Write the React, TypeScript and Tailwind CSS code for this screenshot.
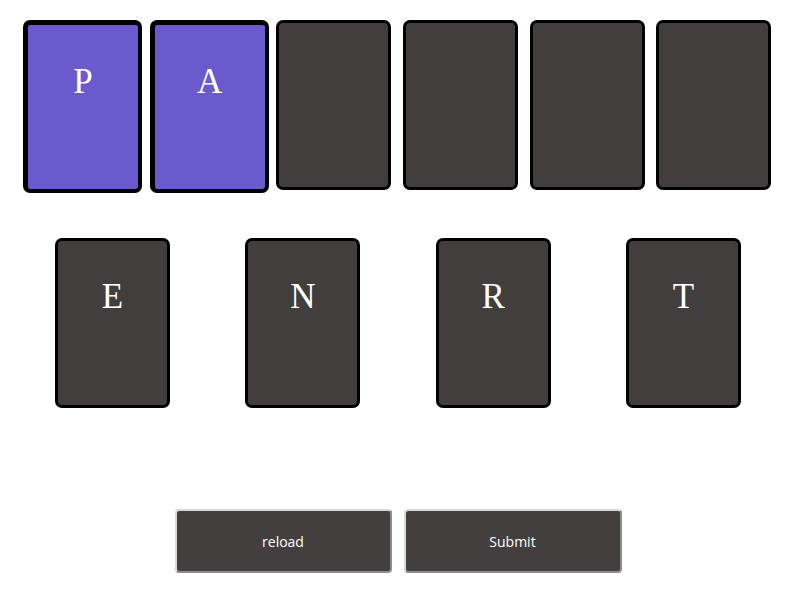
import React from "react";

const top = ["P", "A", "", "", "", ""];
const bottom = ["E", "N", "R", "T"];

function Card({ letter, active }: { letter: string; active?: boolean }) {
  if (active) {
    return (
      <div className="w-[119px] h-[173px] bg-[#6a5acd] border-black border-l-[5px] border-t-[5px] border-r-[4px] border-b-[4px] rounded-[7px] flex justify-center pt-[39px] text-white text-[35px] leading-none" style={{ fontFamily: '"Liberation Serif", serif' }}>
        {letter}
      </div>
    );
  }
  return (
    <div className="w-[115px] h-[170px] bg-[#423e3d] border-black border-[3px] rounded-[7px] flex justify-center pt-[38px] text-white text-[35px] leading-none" style={{ fontFamily: '"Liberation Serif", serif' }}>
      {letter}
    </div>
  );
}

export default function App() {
  return (
    <div className="w-[794px] h-[602px] bg-white relative" style={{ fontFamily: '"Open Sans", sans-serif' }}>
      <div className="pt-[20px] pl-[23px] grid grid-cols-[repeat(6,115px)] gap-x-[11.7px] items-start">
        {top.map((l, i) => (
          <Card key={i} letter={l} active={i < 2} />
        ))}
      </div>
      <div className="mt-[45px] pl-[55px] grid grid-cols-[repeat(4,115px)] gap-x-[75.3px]">
        {bottom.map((l, i) => (
          <Card key={i} letter={l} />
        ))}
      </div>
      <div className="mt-[101px] flex justify-center gap-[12px] pl-[2px]">
        <button className="w-[217px] h-[64px] bg-[#433f3e] text-white text-[14px] rounded-[4px] border-2 border-t-[#d8d8d8] border-l-[#d8d8d8] border-r-[#8c8c8c] border-b-[#8c8c8c]">
          reload
        </button>
        <button className="w-[218px] h-[64px] bg-[#433f3e] text-white text-[14px] rounded-[4px] border-2 border-t-[#d8d8d8] border-l-[#d8d8d8] border-r-[#8c8c8c] border-b-[#8c8c8c]">
          Submit
        </button>
      </div>
    </div>
  );
}
